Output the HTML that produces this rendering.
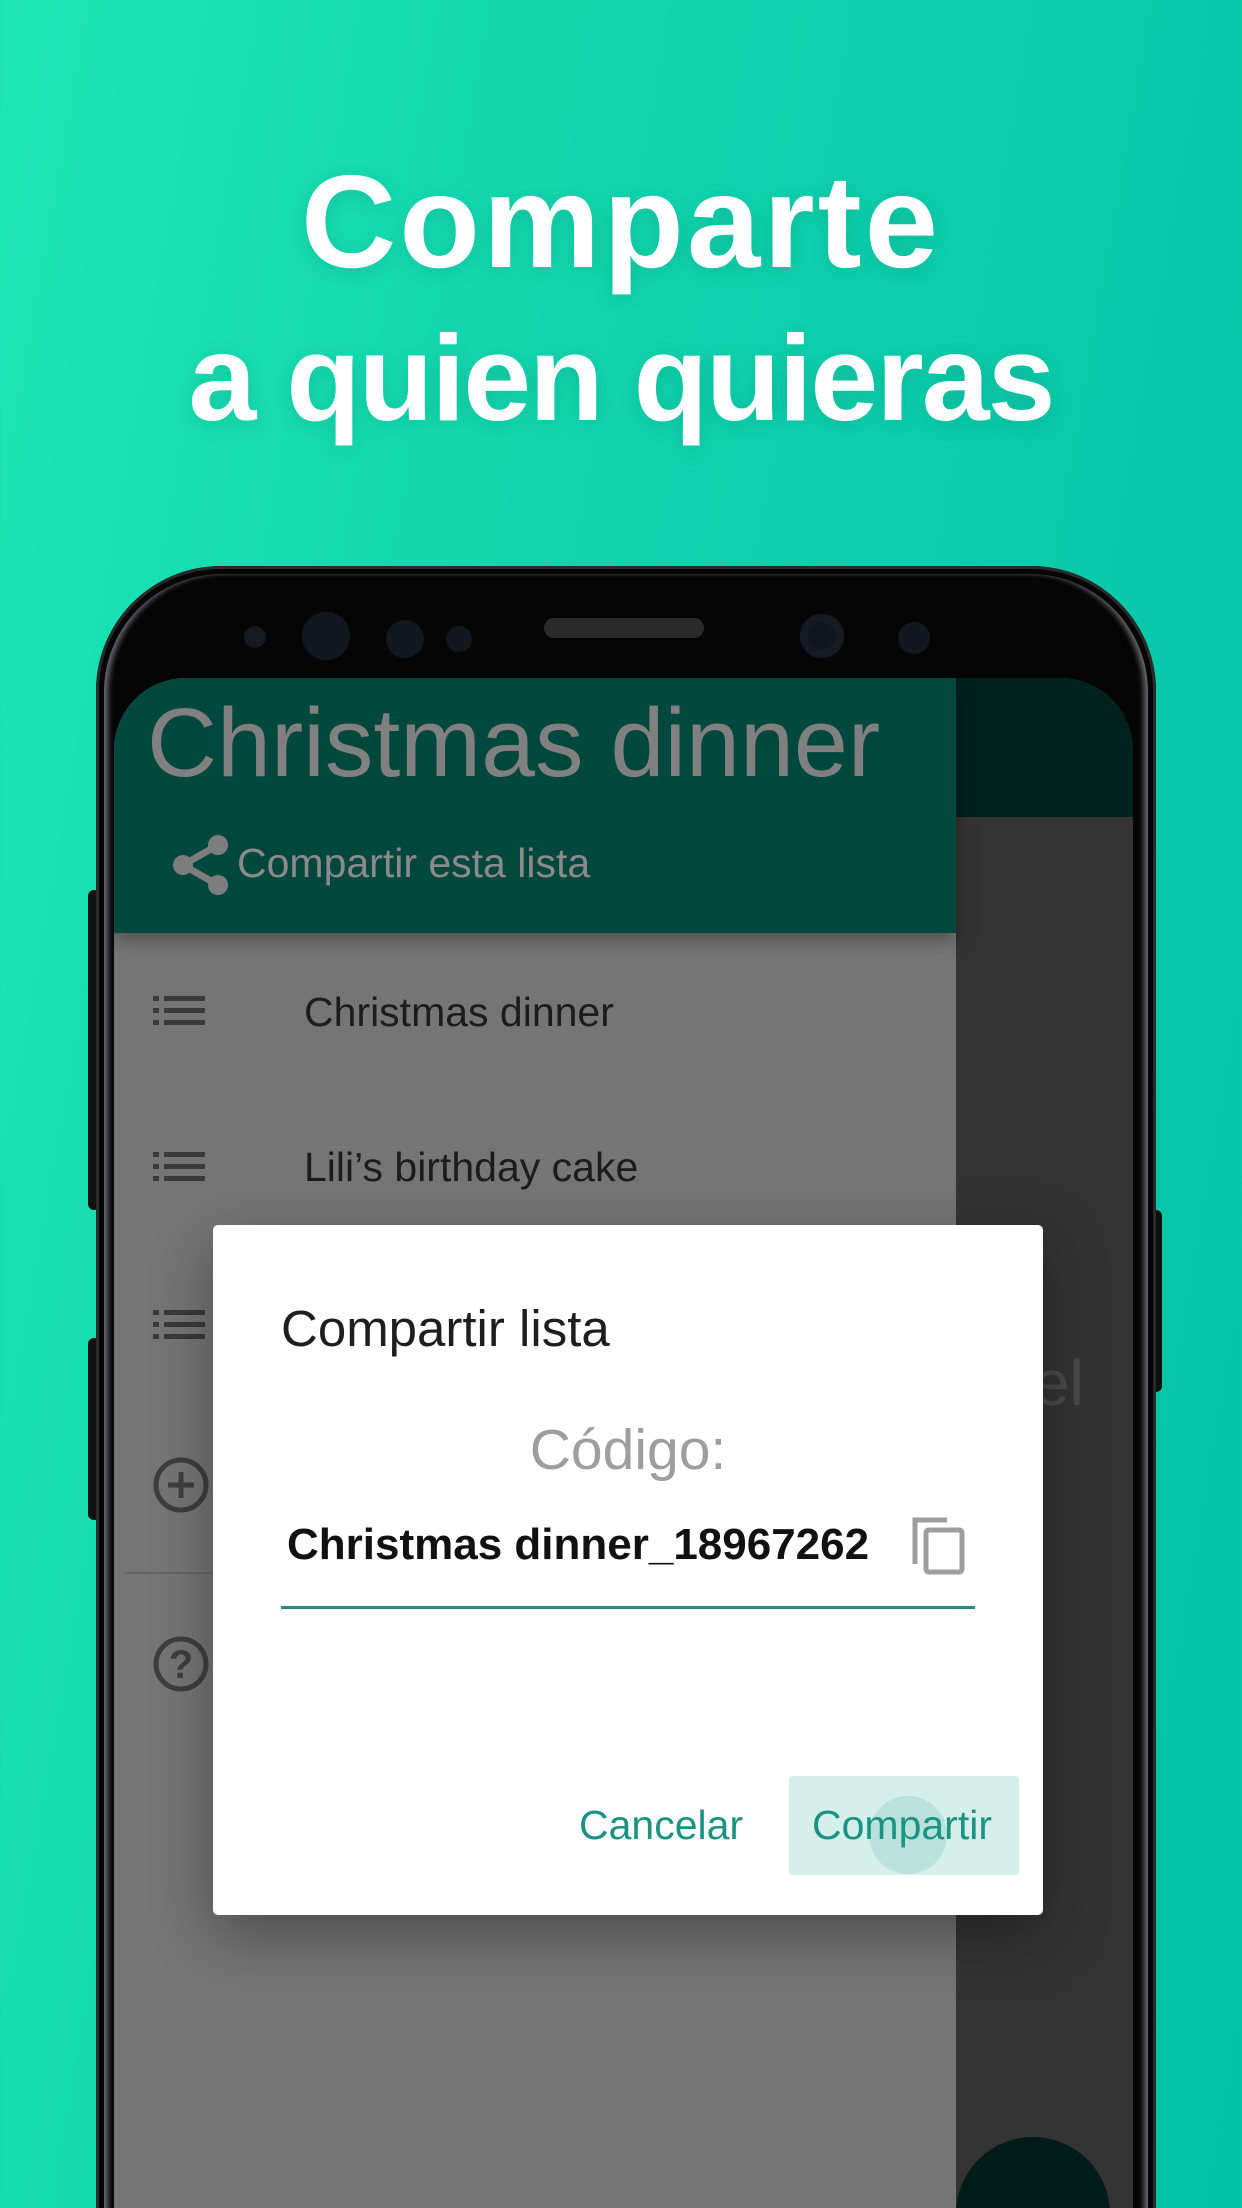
<!DOCTYPE html>
<html><head><meta charset="utf-8">
<style>
*{margin:0;padding:0;box-sizing:border-box}
html,body{width:1242px;height:2208px;overflow:hidden}
body{position:relative;background:linear-gradient(100deg,#1de6b4 0%,#10d3ae 45%,#02c1a6 100%);font-family:"Liberation Sans",sans-serif}
.t{position:absolute;left:0;width:1242px;text-align:center;color:#fff;font-weight:bold;text-shadow:0 4px 20px rgba(0,0,0,0.12)}
.abs{position:absolute}
</style></head><body>
<div class="t" style="top:152px;font-size:132px;letter-spacing:3px;line-height:140px">Comparte</div>
<div class="t" style="top:308px;font-size:122px;letter-spacing:-2px;line-height:140px">a quien quieras</div>

<!-- side buttons -->
<div class="abs" style="left:88px;top:890px;width:12px;height:320px;background:#111;border-radius:6px"></div>
<div class="abs" style="left:88px;top:1338px;width:12px;height:182px;background:#111;border-radius:6px"></div>
<div class="abs" style="left:1150px;top:1210px;width:12px;height:182px;background:#111;border-radius:6px"></div>

<!-- phone -->
<div class="abs" style="left:96px;top:566px;width:1060px;height:1700px;background:#050505;border-radius:125px 125px 0 0;box-shadow:inset 0 0 0 3px #2a2a2a"></div>
<div class="abs" style="left:104px;top:574px;width:1044px;height:1700px;border-radius:118px 118px 0 0;box-shadow:inset 6px 0 6px -2px #6a6a70,inset -6px 0 6px -2px #6a6a70"></div>
<!-- sensors -->
<div class="abs" style="left:244px;top:626px;width:22px;height:22px;border-radius:50%;background:#141a22"></div>
<div class="abs" style="left:302px;top:612px;width:48px;height:48px;border-radius:50%;background:#121820"></div>
<div class="abs" style="left:386px;top:620px;width:38px;height:38px;border-radius:50%;background:#121820"></div>
<div class="abs" style="left:446px;top:626px;width:26px;height:26px;border-radius:50%;background:#121820"></div>
<div class="abs" style="left:544px;top:618px;width:160px;height:20px;border-radius:10px;background:#2a2a2a"></div>
<div class="abs" style="left:800px;top:614px;width:44px;height:44px;border-radius:50%;background:#101620;box-shadow:inset 0 0 0 8px #151b24"></div>
<div class="abs" style="left:898px;top:622px;width:32px;height:32px;border-radius:50%;background:#121820"></div>

<!-- screen -->
<div class="abs" style="left:114px;top:678px;width:1019px;height:1600px;border-radius:72px 72px 0 0;overflow:hidden;background:#333">
  <div class="abs" style="left:0;top:0;width:1019px;height:139px;background:#00221d"></div>
  <div class="abs" style="left:920px;top:668px;font-size:64px;color:#4a4a4a">el</div>
  <div class="abs" style="left:842px;top:1459px;width:154px;height:154px;border-radius:50%;background:#001c18"></div>
  <div class="abs" style="left:916px;top:1537px;width:5px;height:30px;background:#555"></div>
  <!-- drawer -->
  <div class="abs" style="left:0;top:0;width:842px;height:1600px;background:#757575">
    <div class="abs" style="left:0;top:0;width:842px;height:255px;background:#00483e;box-shadow:0 6px 18px rgba(0,0,0,0.35)"></div>
    <div class="abs" style="left:33px;top:10px;font-size:97px;color:#808080;white-space:nowrap;line-height:110px">Christmas dinner</div>
    <svg class="abs" style="left:55px;top:155px" width="70" height="70" viewBox="0 0 70 70">
      <g fill="#7d7d7d" stroke="#7d7d7d" stroke-width="7"><line x1="49" y1="12" x2="14" y2="32"/><line x1="14" y1="32" x2="49" y2="52"/></g>
      <circle cx="49" cy="12" r="10" fill="#7d7d7d"/><circle cx="14" cy="32" r="10" fill="#7d7d7d"/><circle cx="49" cy="52" r="10" fill="#7d7d7d"/>
    </svg>
    <div class="abs" style="left:123px;top:160px;font-size:41px;color:#8a8a8a;white-space:nowrap;line-height:50px">Compartir esta lista</div>

    <svg class="abs" style="left:39px;top:318px" width="54" height="30" viewBox="0 0 54 30"><g fill="#3a3a3a"><rect x="0" y="0" width="6" height="5"/><rect x="11" y="0" width="41" height="5"/><rect x="0" y="12" width="6" height="5"/><rect x="11" y="12" width="41" height="5"/><rect x="0" y="24" width="6" height="5"/><rect x="11" y="24" width="41" height="5"/></g></svg>
    <div class="abs" style="left:190px;top:309px;font-size:41px;color:#1c1c1c;white-space:nowrap;line-height:50px">Christmas dinner</div>
    <svg class="abs" style="left:39px;top:474px" width="54" height="30" viewBox="0 0 54 30"><g fill="#3a3a3a"><rect x="0" y="0" width="6" height="5"/><rect x="11" y="0" width="41" height="5"/><rect x="0" y="12" width="6" height="5"/><rect x="11" y="12" width="41" height="5"/><rect x="0" y="24" width="6" height="5"/><rect x="11" y="24" width="41" height="5"/></g></svg>
    <div class="abs" style="left:190px;top:464px;font-size:41px;color:#1c1c1c;white-space:nowrap;line-height:50px">Lili’s birthday cake</div>
    <svg class="abs" style="left:39px;top:632px" width="54" height="30" viewBox="0 0 54 30"><g fill="#3a3a3a"><rect x="0" y="0" width="6" height="5"/><rect x="11" y="0" width="41" height="5"/><rect x="0" y="12" width="6" height="5"/><rect x="11" y="12" width="41" height="5"/><rect x="0" y="24" width="6" height="5"/><rect x="11" y="24" width="41" height="5"/></g></svg>
    <svg class="abs" style="left:37px;top:777px" width="60" height="60" viewBox="0 0 60 60"><circle cx="30" cy="30" r="25" fill="none" stroke="#3e3e3e" stroke-width="5"/><path d="M30 17v26M17 30h26" stroke="#3e3e3e" stroke-width="5"/></svg>
    <div class="abs" style="left:10px;top:894px;width:832px;height:2px;background:#666"></div>
    <svg class="abs" style="left:37px;top:956px" width="60" height="60" viewBox="0 0 60 60"><circle cx="30" cy="30" r="25" fill="none" stroke="#3e3e3e" stroke-width="5"/><text x="30" y="44" text-anchor="middle" font-family="Liberation Sans" font-weight="bold" font-size="40" fill="#3e3e3e">?</text></svg>
  </div>
</div>

<!-- dialog -->
<div class="abs" style="left:213px;top:1225px;width:830px;height:690px;background:#fff;border-radius:5px;box-shadow:0 20px 60px rgba(0,0,0,0.35)">
  <div class="abs" style="left:68px;top:74px;font-size:51px;color:#1e1e1e;white-space:nowrap;line-height:60px">Compartir lista</div>
  <div class="abs" style="left:0;width:830px;top:192px;text-align:center;font-size:57px;color:#9e9e9e;line-height:66px">Código:</div>
  <div class="abs" style="left:74px;top:295px;font-size:44px;font-weight:bold;color:#111;white-space:nowrap;line-height:50px">Christmas dinner_18967262</div>
  <svg class="abs" style="left:696px;top:289px" width="60" height="62" viewBox="0 0 60 62"><path d="M6 50V6h32" fill="none" stroke="#9e9e9e" stroke-width="5"/><rect x="17" y="16" width="36" height="42" rx="3" fill="none" stroke="#9e9e9e" stroke-width="5"/></svg>
  <div class="abs" style="left:68px;top:381px;width:694px;height:3px;background:#2b8a7c"></div>
  <div class="abs" style="left:366px;top:575px;font-size:41px;color:#1b9383;white-space:nowrap;line-height:50px">Cancelar</div>
  <div class="abs" style="left:576px;top:551px;width:230px;height:99px;background:#d5efeb;border-radius:3px"></div>
  <div class="abs" style="left:656px;top:571px;width:78px;height:78px;border-radius:50%;background:#b9e2dc"></div>
  <div class="abs" style="left:599px;top:575px;font-size:41px;color:#1b9383;white-space:nowrap;line-height:50px">Compartir</div>
</div>
</body></html>
